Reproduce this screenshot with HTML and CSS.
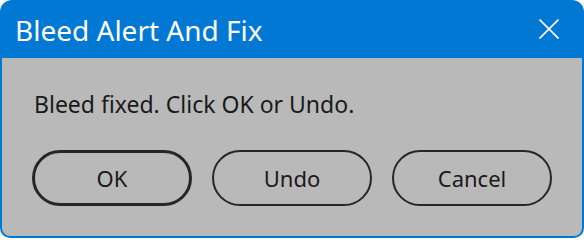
FILE: index.html
```html
<!DOCTYPE html>
<html>
<head>
<meta charset="utf-8">
<link rel="stylesheet" href="styles.css">
</head>
<body>
<div class="window">
  <div class="titlebar">
    <div class="title">Bleed Alert And Fix</div>
    <div class="close">
      <svg width="20" height="20" viewBox="0 0 20 20"><path d="M0.5 0.5L19.5 19.5M19.5 0.5L0.5 19.5" stroke="#fff" stroke-width="1.6" fill="none"/></svg>
    </div>
  </div>
  <div class="content">
    <div class="message">Bleed fixed. Click OK or Undo.</div>
    <div class="buttons">
      <div class="btn default">OK</div>
      <div class="btn">Undo</div>
      <div class="btn">Cancel</div>
    </div>
  </div>
</div>
</body>
</html>
```
FILE: styles.css
```css
html, body {
  margin: 0;
  padding: 0;
  background: #ffffff;
}
.window {
  width: 584px;
  height: 238px;
  box-sizing: border-box;
  background: #0078d4;
  border-radius: 12px 12px 10px 10px;
  padding: 0 2px 2px 2px;
  display: flex;
  flex-direction: column;
  font-family: "Noto Sans", "Open Sans", sans-serif;
}
.titlebar {
  height: 58px;
  display: flex;
  align-items: center;
  justify-content: space-between;
  flex-shrink: 0;
}
.title {
  color: #ffffff;
  font-size: 28px;
  line-height: 38px;
  padding-left: 13px;
  padding-top: 1px;
}
.close {
  width: 20px;
  height: 20px;
  margin-right: 23px;
  margin-top: -1px;
  display: flex;
}
.content {
  flex: 1;
  background: #b9b9b9;
  border-radius: 0 0 8px 8px;
  display: flex;
  flex-direction: column;
}
.message {
  color: #1a1a1a;
  font-size: 23px;
  line-height: 32px;
  padding-left: 32px;
  margin-top: 30px;
}
.buttons {
  display: flex;
  gap: 20px;
  padding-left: 30px;
  margin-top: 30px;
}
.btn {
  width: 160px;
  height: 56px;
  box-sizing: border-box;
  border: 2px solid #262626;
  border-radius: 28px;
  display: flex;
  align-items: center;
  justify-content: center;
  color: #1a1a1a;
  font-size: 22px;
}
.btn.default {
  border-width: 3px;
}
```
